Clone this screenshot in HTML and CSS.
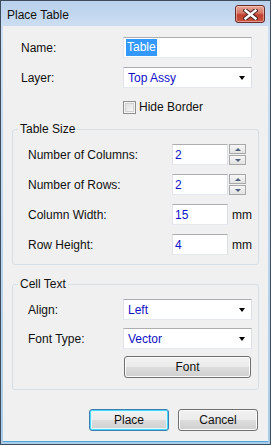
FILE: index.html
```html
<!DOCTYPE html>
<html>
<head>
<meta charset="utf-8">
<link rel="stylesheet" href="styles.css">
</head>
<body>
<div class="window">
  <div class="titlebar">
    <span class="title">Place Table</span>
    <button class="close" aria-label="Close">
      <svg width="15" height="11" viewBox="0 0 15 11">
        <path d="M2.5 1.5 L12.5 9.5 M12.5 1.5 L2.5 9.5" stroke="#4a2020" stroke-width="4.4" stroke-linecap="square"/>
        <path d="M2.5 1.5 L12.5 9.5 M12.5 1.5 L2.5 9.5" stroke="#ffffff" stroke-width="2.4" stroke-linecap="square"/>
      </svg>
    </button>
  </div>
  <div class="client">
    <div class="row first">
      <span class="lbl">Name:</span>
      <div class="textbox wide"><span class="sel">Table</span></div>
    </div>
    <div class="row">
      <span class="lbl">Layer:</span>
      <div class="combo"><span class="val">Top Assy</span><span class="arrow"></span></div>
    </div>
    <div class="check-row">
      <span class="checkbox"></span><span class="check-text">Hide Border</span>
    </div>

    <fieldset class="group size-group">
      <legend>Table Size</legend>
      <div class="group-body">
        <div class="grow">
          <span class="glbl">Number of Columns:</span>
          <div class="textbox small"><span class="val">2</span></div>
          <div class="spin"><span class="spin-btn up"></span><span class="spin-btn down"></span></div>
        </div>
        <div class="grow">
          <span class="glbl">Number of Rows:</span>
          <div class="textbox small"><span class="val">2</span></div>
          <div class="spin"><span class="spin-btn up"></span><span class="spin-btn down"></span></div>
        </div>
        <div class="grow">
          <span class="glbl">Column Width:</span>
          <div class="textbox small"><span class="val">15</span></div>
          <span class="unit">mm</span>
        </div>
        <div class="grow">
          <span class="glbl">Row Height:</span>
          <div class="textbox small"><span class="val">4</span></div>
          <span class="unit">mm</span>
        </div>
      </div>
    </fieldset>

    <fieldset class="group cell-group">
      <legend>Cell Text</legend>
      <div class="group-body cell-body">
        <div class="crow">
          <span class="clbl">Align:</span>
          <div class="combo"><span class="val">Left</span><span class="arrow"></span></div>
        </div>
        <div class="crow">
          <span class="clbl">Font Type:</span>
          <div class="combo"><span class="val">Vector</span><span class="arrow"></span></div>
        </div>
        <div class="crow font-row">
          <button class="btn font-btn">Font</button>
        </div>
      </div>
    </fieldset>

    <div class="buttons">
      <button class="btn default">Place</button>
      <button class="btn">Cancel</button>
    </div>
  </div>
</div>
</body>
</html>
```
FILE: styles.css
```css
* { box-sizing: border-box; }
html, body { margin: 0; padding: 0; background: #ffffff; }
body {
  font-family: "Liberation Sans", Arial, sans-serif;
  font-size: 12px;
  color: #111111;
}
.window {
  width: 271px;
  height: 445px;
  border: 1px solid #3e4d5e;
  background: linear-gradient(#b9d1ec, #cfe0f3 30px, #a9cbe8);
  padding: 0 2px 2px 2px;
  display: flex;
  flex-direction: column;
}
.titlebar {
  height: 25px;
  display: flex;
  align-items: center;
  justify-content: space-between;
  padding: 0 3px 0 4px;
  flex: none;
}
.title {
  color: #111;
  font-size: 12px;
  margin-top: 2px;
}
.close {
  width: 30px;
  height: 18px;
  margin-top: 1px;
  border: 1px solid #6b2c2c;
  border-radius: 3px;
  background: linear-gradient(#e8a898, #d47463 45%, #bf3f2f 55%, #c9553f);
  padding: 0;
  display: flex;
  align-items: center;
  justify-content: center;
  box-shadow: inset 0 0 0 1px rgba(255,220,210,0.5);
}
.client {
  flex: 1;
  background: #f0f0f0;
  padding-top: 11px;
  display: flex;
  flex-direction: column;
  border-bottom: 1px solid #4fa6d8;
}
.row {
  display: flex;
  align-items: center;
  height: 21px;
  padding-left: 18px;
  margin-bottom: 9px;
}
.lbl { width: 102px; }
.textbox, .combo {
  height: 21px;
  background: #ffffff;
  border: 1px solid;
  border-color: #abadb3 #dbdfe6 #e3e9ef #e2e3ea;
  display: flex;
  align-items: center;
}
.textbox.wide { width: 129px; padding-left: 2px; }
.sel {
  background: #3399ff;
  color: #ffffff;
  padding: 1px 1px 2px 1px;
  line-height: 14px;
}
.val { color: #1010c8; }
.combo {
  width: 129px;
  padding: 0 6px 0 4px;
  justify-content: space-between;
}
.arrow {
  width: 0;
  height: 0;
  border-left: 3.5px solid transparent;
  border-right: 3.5px solid transparent;
  border-top: 4px solid #000;
  margin-top: 1px;
}
.check-row {
  display: flex;
  align-items: center;
  padding-left: 120px;
  margin-top: 3px;
  height: 14px;
}
.checkbox {
  width: 13px;
  height: 13px;
  border: 1px solid #8e8f8f;
  background: linear-gradient(135deg, #dcdcdc, #fbfbfb);
  box-shadow: inset 0 0 0 1px #f4f4f4, inset 0 0 0 2px #d2d2d2;
  margin-right: 3px;
}
.group {
  margin: 8px 9px 0 9px;
  padding: 0;
  border: 1px solid #d5dfe5;
  border-radius: 3px;
  min-width: 0;
}
.group legend {
  margin-left: 5px;
  padding: 0 2px;
  line-height: 14px;
}
.group-body {
  padding: 8px 0 9px 15px;
  display: flex;
  flex-direction: column;
  gap: 9px;
}
.grow {
  display: flex;
  align-items: center;
  height: 21px;
}
.glbl { width: 144px; }
.textbox.small { width: 56px; padding-left: 2px; }
.spin {
  display: flex;
  flex-direction: column;
  margin-left: 1px;
  height: 21px;
  justify-content: space-between;
}
.spin-btn {
  width: 17px;
  height: 10px;
  border: 1px solid #a8a8a8;
  background: linear-gradient(#f6f6f6, #e2e2e2);
  display: flex;
  align-items: center;
  justify-content: center;
}
.spin-btn::after {
  content: "";
  width: 0;
  height: 0;
  border-left: 3px solid transparent;
  border-right: 3px solid transparent;
}
.spin-btn.up::after { border-bottom: 3px solid #4c607e; }
.spin-btn.down::after { border-top: 3px solid #4c607e; }
.unit { margin-left: 4px; }
.cell-group { margin-top: 12px; }
.cell-body { padding-top: 8px; padding-bottom: 11px; gap: 8px; }
.crow {
  display: flex;
  align-items: center;
  height: 21px;
}
.clbl { width: 95px; }
.font-row { padding-left: 96px; height: 22px; margin-top: -1px; }
.btn {
  font-family: "Liberation Sans", Arial, sans-serif;
  font-size: 12px;
  color: #111;
  height: 22px;
  border: 1px solid #707070;
  border-radius: 3px;
  background: linear-gradient(#f2f2f2 0%, #ebebeb 50%, #dddddd 51%, #cfcfcf 100%);
  box-shadow: inset 0 0 0 1px #fcfcfc;
  padding: 0;
}
.font-btn { width: 127px; }
.buttons {
  display: flex;
  justify-content: flex-end;
  gap: 9px;
  padding-right: 10px;
  margin-top: 19px;
}
.buttons .btn { width: 80px; }
.btn.default {
  border-color: #3c7fb1;
  box-shadow: inset 0 0 0 1px #48d7fb, inset 0 0 0 2px #e4f6fd;
}
```
